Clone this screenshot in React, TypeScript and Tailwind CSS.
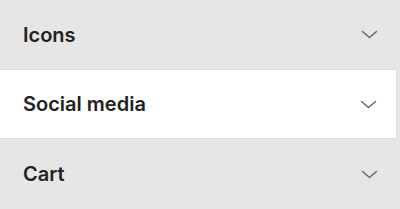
const items = ['Icons', 'Social media', 'Cart'];

function Chevron() {
  return (
    <svg width="17" height="9" viewBox="0 0 17 9" fill="none" className="shrink-0">
      <path d="M1.5 1.5L8.5 7.5L15.5 1.5" stroke="#6b6b6b" strokeWidth="1.6" strokeLinecap="round" strokeLinejoin="round" />
    </svg>
  );
}

export default function App() {
  return (
    <div className="w-[400px] h-[209px] bg-[#e6e6e6] font-['Inter','Liberation_Sans',sans-serif] text-[#222]">
      {/* Icons */}
      <div className="flex items-center justify-between h-[69px] pl-[23px] pr-[22px]">
        <span className="text-[20px] font-semibold">{items[0]}</span>
        <Chevron />
      </div>

      {/* Social media (active) */}
      <div className="flex items-center justify-between h-[70px] w-[397px] bg-white border-y border-r border-[#dcdcdc] pl-[23px] pr-[19px]">
        <span className="text-[20px] font-semibold">{items[1]}</span>
        <Chevron />
      </div>

      {/* Cart */}
      <div className="flex items-center justify-between h-[70px] pl-[23px] pr-[22px]">
        <span className="text-[20px] font-semibold">{items[2]}</span>
        <Chevron />
      </div>
    </div>
  );
}
